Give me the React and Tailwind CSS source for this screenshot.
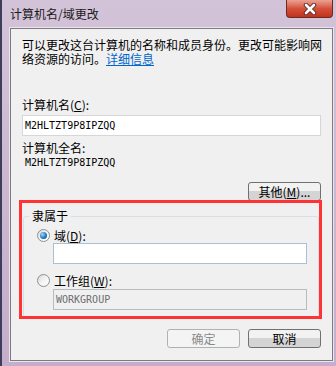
import React from 'react';

const cjk = "font-['Noto_Sans_CJK_SC','Noto_Sans',sans-serif]";
const mono = "font-['DejaVu_Sans_Mono','Liberation_Mono',monospace]";

function Radio({ checked }) {
  return (
    <span className="w-[13px] h-[13px] rounded-full border border-[#8e8f8f] bg-gradient-to-br from-[#d8d8d8] via-[#f4f4f4] to-[#ffffff] flex items-center justify-center shrink-0">
      {checked && (
        <span className="w-[7px] h-[7px] rounded-full bg-[radial-gradient(circle_at_35%_35%,#9fd4ff,#1b73c2_60%,#0d3f74)]" />
      )}
    </span>
  );
}

function Button({ children, disabled, className = '' }) {
  return (
    <div
      className={
        'w-[73px] h-[19px] rounded-[3px] border flex items-center justify-center text-[12px] leading-none ' +
        (disabled
          ? 'border-[#adb2b5] bg-[#f4f4f4] text-[#8a8a8a] '
          : 'border-[#707070] bg-gradient-to-b from-[#f2f2f2] from-50% to-[#d4d4d4] to-50% text-black ') +
        className
      }
    >
      {children}
    </div>
  );
}

export default function App() {
  return (
    <div className={`relative w-[336px] h-[366px] overflow-hidden flex flex-col border-l-2 border-[#3f3d5c] bg-gradient-to-b from-[#d3c3d8] via-[#cbb8d0] to-[#c4aecb] ${cjk}`}>
      {/* title bar */}
      <div className="h-[28px] flex items-start justify-between shrink-0">
        <div className="pl-[8px] pt-[7px] text-[12px] leading-[14px] text-[#1a1a1a]">计算机名/域更改</div>
        <div className="mr-[3px] w-[47px] h-[18px] rounded-b-[4px] border border-t-0 border-[#6b2a22] bg-gradient-to-b from-[#eaa193] via-[#d4503a] to-[#c0321c] flex items-center justify-center">
          <svg width="14" height="12" viewBox="0 0 14 12">
            <path d="M3 2 L11 10 M11 2 L3 10" stroke="#5a2a26" strokeWidth="4.5" strokeLinecap="round" />
            <path d="M3 2 L11 10 M11 2 L3 10" stroke="#ffffff" strokeWidth="2.6" strokeLinecap="round" />
          </svg>
        </div>
      </div>

      {/* client area */}
      <div className="ml-[8px] mr-[3px] mb-[5px] flex-1 bg-[#f0f0f0] border border-[#7d7a80] shadow-[0_0_0_1px_#ebe3ee] px-[11px] pt-[9px] text-[12px] leading-[14px] text-black flex flex-col">
        <p className="w-[304px]">
          可以更改这台计算机的名称和成员身份。更改可能影响网络资源的访问。<span className="text-[#0066cc] underline">详细信息</span>
        </p>

        <div className="mt-[32px]">计算机名(<u>C</u>):</div>
        <div className="mt-[3px] w-[299px] h-[21px] bg-white border border-[#d6d6d6] flex items-center pl-[2px]">
          <span className={`${mono} text-[10px]`}>M2HLTZT9P8IPZQQ</span>
        </div>

        <div className="mt-[5px]">计算机全名:</div>
        <div className={`${mono} text-[10px] leading-[12px] mt-[2px] pl-[3px]`}>M2HLTZT9P8IPZQQ</div>

        <div className="mt-[13px] flex justify-end w-[299px]">
          <Button>其他(<u>M</u>)...</Button>
        </div>

        {/* group box */}
        <div className="relative mt-[15px] ml-[1px] w-[296px] h-[102px] border border-[#d5dfe5] rounded-[3px] pt-[12px] pl-[13px]">
          <span className="absolute -top-[8px] left-[5px] px-[3px] bg-[#f0f0f0]">隶属于</span>
          <div className="flex items-center gap-[4px] h-[13px]">
            <Radio checked />
            <span>域(<u>D</u>):</span>
          </div>
          <div className="ml-[16px] mt-[1px] w-[254px] h-[21px] bg-white border border-[#a9c0d6]" />
          <div className="flex items-center gap-[4px] h-[13px] mt-[10px]">
            <Radio />
            <span>工作组(<u>W</u>):</span>
          </div>
          <div className="ml-[16px] mt-[2px] w-[254px] h-[21px] bg-[#f0f0f0] border border-[#b9bcbf] flex items-center pl-[2px]">
            <span className={`${mono} text-[10px] text-[#6d6d6d]`}>WORKGROUP</span>
          </div>
        </div>

        <div className="mt-[11px] w-[299px] flex justify-end gap-[8px]">
          <Button disabled>确定</Button>
          <Button>取消</Button>
        </div>
      </div>

      {/* red annotation box */}
      <div className="absolute left-[17px] top-[200px] w-[303px] h-[119px] border-[3px] border-[#ff3333] pointer-events-none" />
    </div>
  );
}
